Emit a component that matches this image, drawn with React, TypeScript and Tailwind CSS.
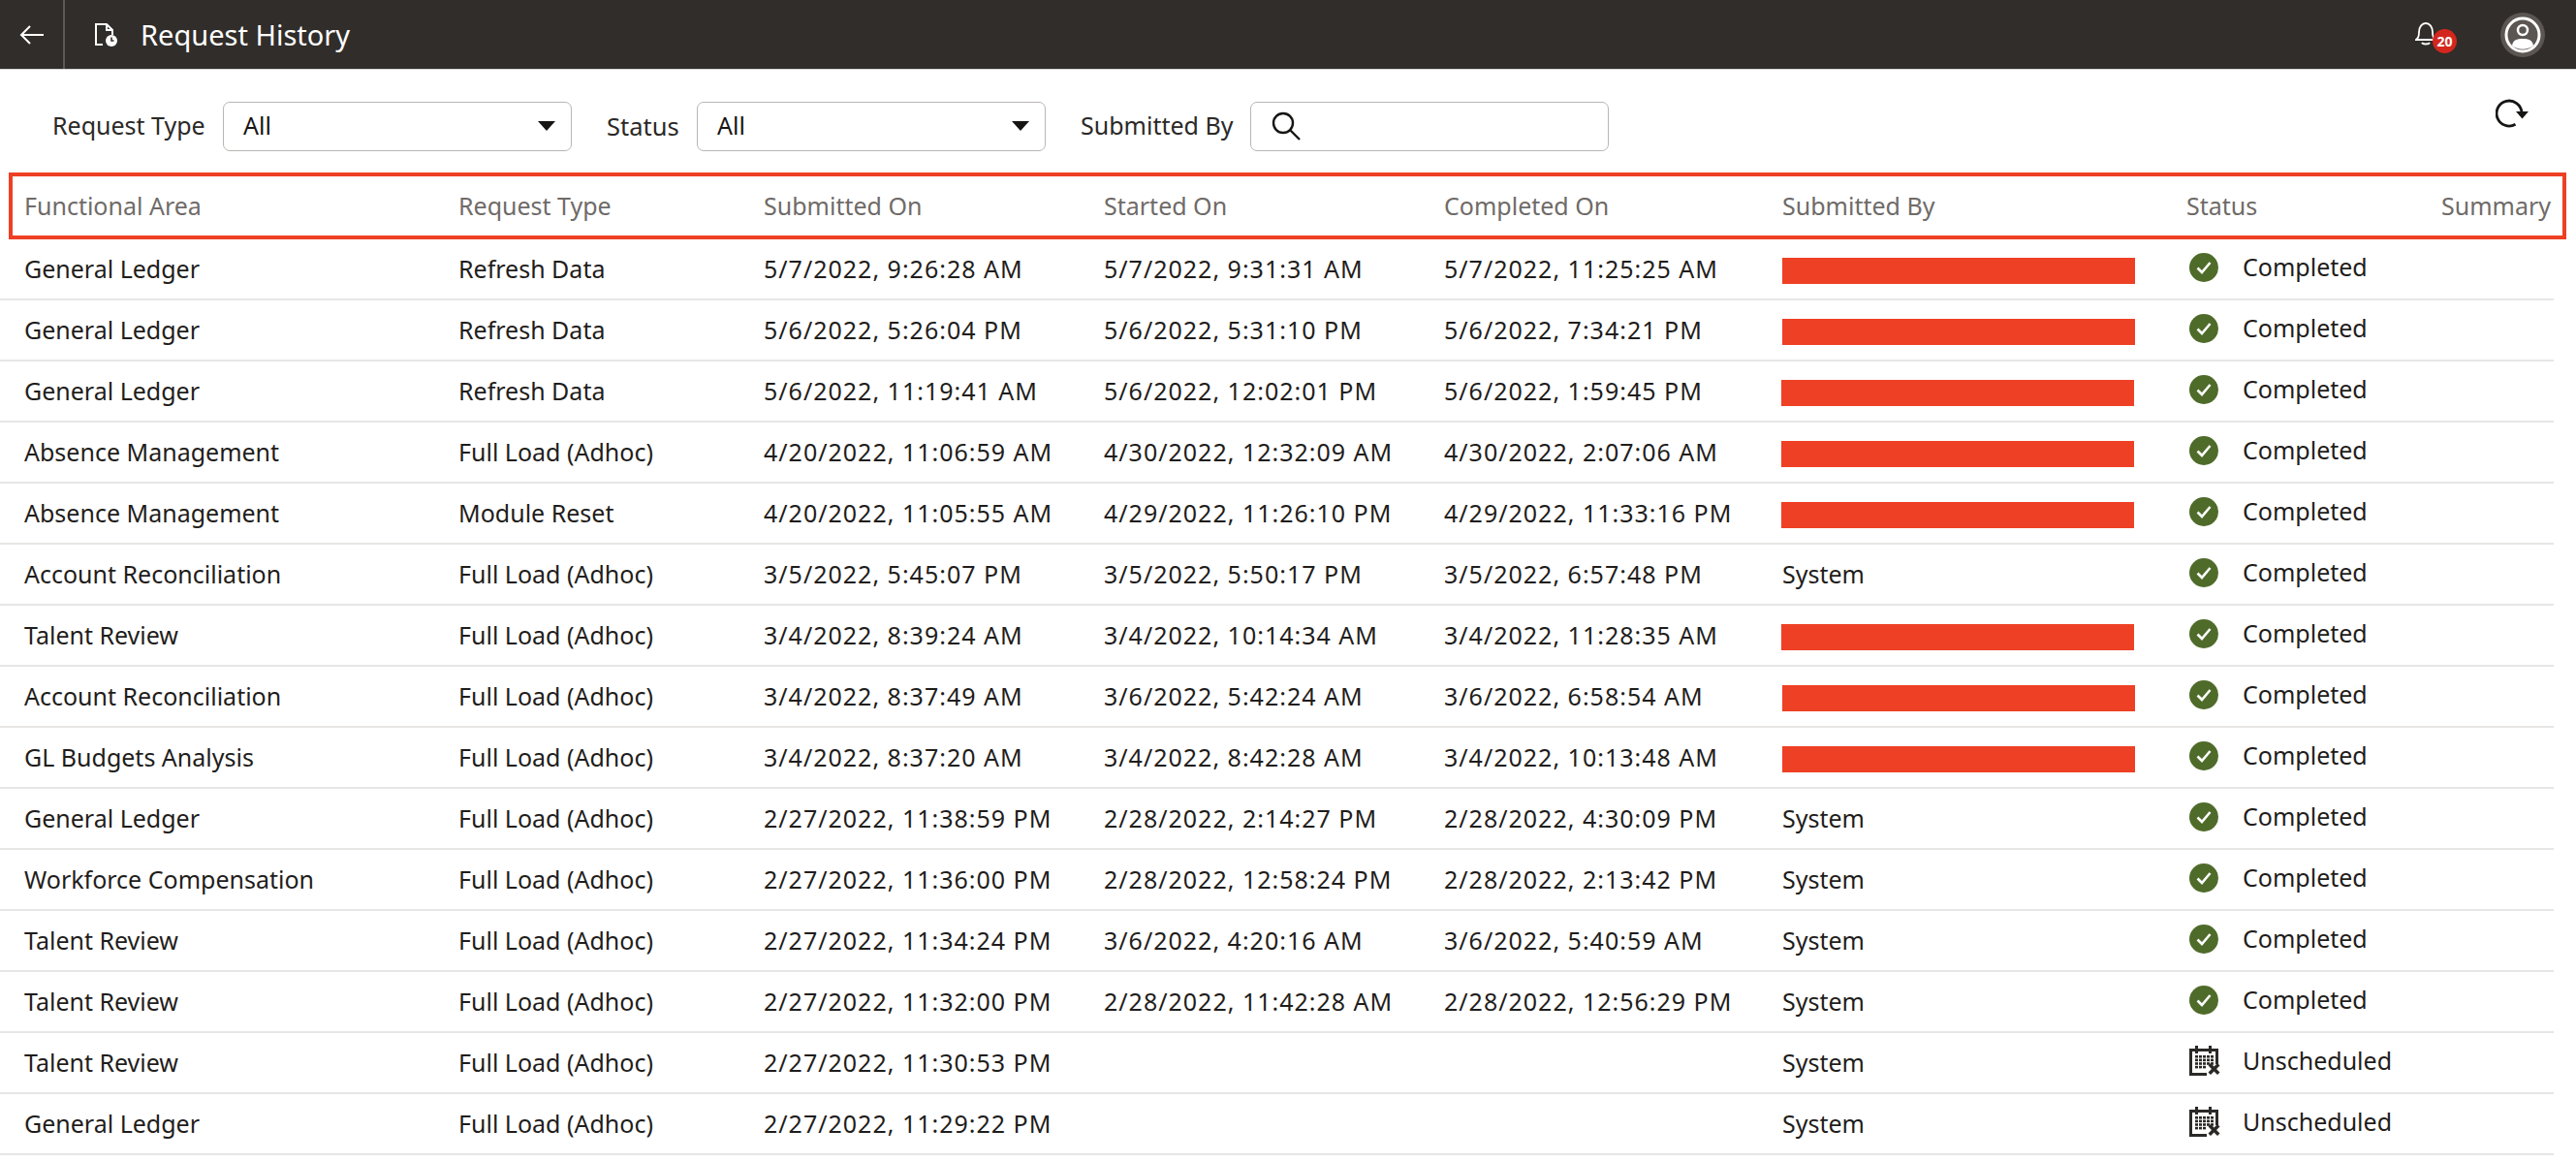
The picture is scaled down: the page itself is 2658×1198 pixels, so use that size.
const COLS = "grid grid-cols-[448px_315px_351px_351px_349px_416px_1fr_170px]";

const rows: [string, string, string, string, string, string, boolean, number][] = [
  ["General Ledger", "Refresh Data", "5/7/2022, 9:26:28 AM", "5/7/2022, 9:31:31 AM", "5/7/2022, 11:25:25 AM", "", true, 0],
  ["General Ledger", "Refresh Data", "5/6/2022, 5:26:04 PM", "5/6/2022, 5:31:10 PM", "5/6/2022, 7:34:21 PM", "", true, 0],
  ["General Ledger", "Refresh Data", "5/6/2022, 11:19:41 AM", "5/6/2022, 12:02:01 PM", "5/6/2022, 1:59:45 PM", "", true, 1],
  ["Absence Management", "Full Load (Adhoc)", "4/20/2022, 11:06:59 AM", "4/30/2022, 12:32:09 AM", "4/30/2022, 2:07:06 AM", "", true, 1],
  ["Absence Management", "Module Reset", "4/20/2022, 11:05:55 AM", "4/29/2022, 11:26:10 PM", "4/29/2022, 11:33:16 PM", "", true, 1],
  ["Account Reconciliation", "Full Load (Adhoc)", "3/5/2022, 5:45:07 PM", "3/5/2022, 5:50:17 PM", "3/5/2022, 6:57:48 PM", "System", true, 0],
  ["Talent Review", "Full Load (Adhoc)", "3/4/2022, 8:39:24 AM", "3/4/2022, 10:14:34 AM", "3/4/2022, 11:28:35 AM", "", true, 1],
  ["Account Reconciliation", "Full Load (Adhoc)", "3/4/2022, 8:37:49 AM", "3/6/2022, 5:42:24 AM", "3/6/2022, 6:58:54 AM", "", true, 0],
  ["GL Budgets Analysis", "Full Load (Adhoc)", "3/4/2022, 8:37:20 AM", "3/4/2022, 8:42:28 AM", "3/4/2022, 10:13:48 AM", "", true, 0],
  ["General Ledger", "Full Load (Adhoc)", "2/27/2022, 11:38:59 PM", "2/28/2022, 2:14:27 PM", "2/28/2022, 4:30:09 PM", "System", true, 0],
  ["Workforce Compensation", "Full Load (Adhoc)", "2/27/2022, 11:36:00 PM", "2/28/2022, 12:58:24 PM", "2/28/2022, 2:13:42 PM", "System", true, 0],
  ["Talent Review", "Full Load (Adhoc)", "2/27/2022, 11:34:24 PM", "3/6/2022, 4:20:16 AM", "3/6/2022, 5:40:59 AM", "System", true, 0],
  ["Talent Review", "Full Load (Adhoc)", "2/27/2022, 11:32:00 PM", "2/28/2022, 11:42:28 AM", "2/28/2022, 12:56:29 PM", "System", true, 0],
  ["Talent Review", "Full Load (Adhoc)", "2/27/2022, 11:30:53 PM", "", "", "System", false, 0],
  ["General Ledger", "Full Load (Adhoc)", "2/27/2022, 11:29:22 PM", "", "", "System", false, 0],
];

function CheckIcon() {
  return (
    <svg className="mr-[25px]" width="30" height="30" viewBox="0 0 30 30">
      <circle cx="15" cy="15" r="15" fill="#4f6b2a" />
      <path d="M8.5 15.5l4.5 4.5 8.5-10" fill="none" stroke="#fff" strokeWidth="2.6" />
    </svg>
  );
}

function CalendarXIcon() {
  return (
    <svg className="mr-[23px]" width="32" height="32" viewBox="0 0 32 32" fill="#2b2927">
      <path d="M0 3h6V0h3v3h11V0h3v3h7v16h-3V6h-4v2h-3V6H9v2H6V6H3v22h15v3H0z" />
      {[0, 1, 2, 3, 4].map((c) =>
        [0, 1, 2, 3].map((r) =>
          c > 2 && r === 3 ? null : <rect key={`${c}-${r}`} x={6 + c * 4} y={10 + r * 3.6} width="3" height="2.6" />
        )
      )}
      <path d="M19.5 20.5l2.5-2.5 3.5 3.5L29 18l2.5 2.5L28 24l3.5 3.5L29 30l-3.5-3.5L22 30l-2.5-2.5L23 24z" />
    </svg>
  );
}

function Caret() {
  return <span className="w-0 h-0 border-l-[9px] border-r-[9px] border-t-[10px] border-l-transparent border-r-transparent border-t-[#161513]" />;
}

function Select({ label }: { label: string }) {
  return (
    <div className="w-[360px] h-[51px] border border-[#b9b6b3] rounded-[7px] flex items-center justify-between pl-[20px] pr-[16px] text-[#161513]">
      <span>{label}</span>
      <Caret />
    </div>
  );
}

export default function App() {
  return (
    <div className="w-[2658px] h-[1198px] overflow-hidden bg-white text-[25px] text-[#1f1d1b] font-['Noto_Sans','Open_Sans',sans-serif]">
      <header className="h-[72px] bg-[#312d2a] border-b border-[#d8d6d4] flex items-center text-white">
        <div className="w-[67px] h-full border-r-2 border-[#5c5855] flex items-center justify-center shrink-0">
          <svg width="26" height="22" viewBox="0 0 26 22" fill="none" stroke="#fff" strokeWidth="2">
            <path d="M25 11H2M11 2l-9 9 9 9" />
          </svg>
        </div>
        <svg className="ml-[30px]" width="26" height="26" viewBox="0 0 26 26" fill="none">
          <path d="M9 23H2V2h11l6 6v5M13 2v6h6" stroke="#fff" strokeWidth="2" />
          <circle cx="18" cy="19" r="6" fill="#fff" />
          <path d="M18 15.5V19h2.5" stroke="#312d2a" strokeWidth="1.6" />
        </svg>
        <span className="ml-[22px] text-[29px]">Request History</span>
        <div className="ml-auto mr-[32px] flex items-center">
          <div className="relative mr-[64px] w-[24px] h-[26px]">
            <svg width="22" height="24" viewBox="0 0 22 24" fill="none" stroke="#fff" strokeWidth="1.8">
              <path d="M1 18h20c-2-2-3-3-3-8C18 5 15 1 11 1S4 5 4 10c0 5-1 6-3 8zM7 21c1 2 7 2 8 0" />
            </svg>
            <span className="absolute left-[18px] top-[7px] w-[25px] h-[25px] rounded-full bg-[#d3271e] text-white text-[14px] font-bold flex items-center justify-center">20</span>
          </div>
          <div className="w-[46px] h-[46px] rounded-full bg-[#5b5652] flex items-center justify-center">
            <svg width="38" height="38" viewBox="0 0 38 38" fill="none">
              <circle cx="19" cy="19" r="17" stroke="#fff" strokeWidth="3" />
              <circle cx="19" cy="14" r="5" stroke="#fff" strokeWidth="2.5" />
              <path d="M8 30c1-6 5-7 11-7s10 1 11 7c-6 5-16 5-22 0z" fill="#fff" />
            </svg>
          </div>
        </div>
      </header>

      <div className="h-[106px] flex items-center pl-[54px] pr-[50px] pt-[10px]">
        <span className="w-[176px] text-[#2b2927]">Request Type</span>
        <Select label="All" />
        <span className="ml-[36px] w-[93px] text-[#2b2927] text-[25.5px]">Status</span>
        <Select label="All" />
        <span className="ml-[36px] w-[175px] text-[#2b2927]">Submitted By</span>
        <div className="w-[370px] h-[51px] border border-[#b9b6b3] rounded-[7px] flex items-center pl-[20px]">
          <svg width="32" height="32" viewBox="0 0 32 32" fill="none" stroke="#161513" strokeWidth="2.4">
            <circle cx="13" cy="13" r="10" />
            <path d="M20 20l10 10" />
          </svg>
        </div>
        <svg className="ml-auto -mt-[26px] -mr-[1px]" width="34" height="32" viewBox="0 0 34 32" fill="none" stroke="#161513" strokeWidth="2.8">
          <path d="M20.5 27.3A13 13 0 1 1 27 15" />
          <path d="M21 14h13l-6.500 7.500z" fill="#161513" stroke="none" />
        </svg>
      </div>

      <div className={`${COLS} mx-[9px] h-[69px] border-[4px] border-[#ee4024] items-center text-[#6f6b68] w-[2639px]`}>
        <span className="pl-[12px]">Functional Area</span>
        <span className="pl-[12px]">Request Type</span>
        <span className="pl-[12px]">Submitted On</span>
        <span className="pl-[12px]">Started On</span>
        <span className="pl-[12px]">Completed On</span>
        <span className="pl-[12px]">Submitted By</span>
        <span className="pl-[13px]">Status</span>
        <span className="text-right pr-[12px]">Summary</span>
      </div>

      <div>
        {rows.map((r, i) => (
          <div key={i} className={`${COLS} h-[63px] items-center w-[2635px] pl-[13px] border-b-2 border-[#e7e6e5]`}>
            <span className="pl-[12px] whitespace-nowrap">{r[0]}</span>
            <span className="pl-[12px] whitespace-nowrap">{r[1]}</span>
            <span className="pl-[12px] whitespace-nowrap tracking-[1px]">{r[2]}</span>
            <span className="pl-[12px] whitespace-nowrap tracking-[1px]">{r[3]}</span>
            <span className="pl-[12px] whitespace-nowrap tracking-[1px]">{r[4]}</span>
            <span className="pl-[12px] whitespace-nowrap">
              {r[5] ? r[5] : <span className={`block w-[364px] h-[27px] mt-[4px] bg-[#ee4024] ${r[7] ? "-ml-[1px]" : ""}`} />}
            </span>
            <span className="pl-[16px] flex items-center -mt-[3px] whitespace-nowrap">
              {r[6] ? <CheckIcon /> : <CalendarXIcon />}
              <span>{r[6] ? "Completed" : "Unscheduled"}</span>
            </span>
            <span />
          </div>
        ))}
      </div>
    </div>
  );
}
